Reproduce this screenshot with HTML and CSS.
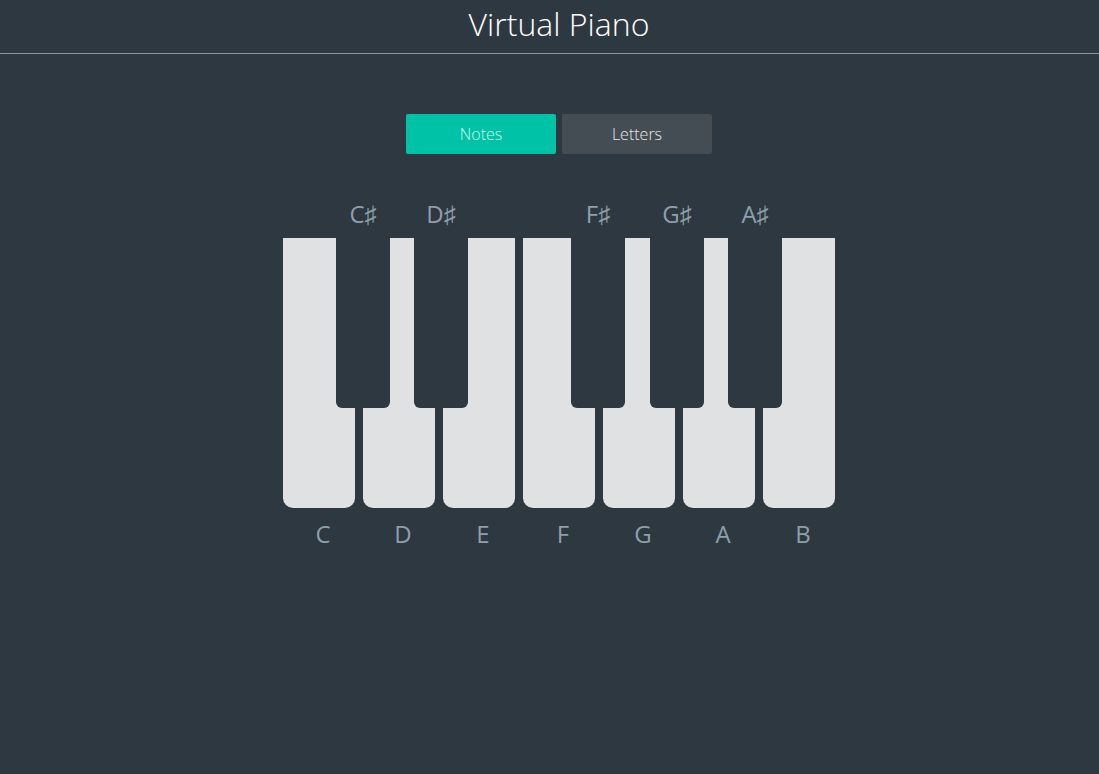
FILE: index.html
```html
<!DOCTYPE html>
<html>
<head>
<meta charset="utf-8">
<title>Virtual Piano</title>
<link rel="stylesheet" href="styles.css">
</head>
<body>
<header class="header"><h1 class="title">Virtual Piano</h1></header>
<main class="main">
  <div class="modes">
    <button class="mode mode-active">Notes</button>
    <button class="mode">Letters</button>
  </div>
  <div class="piano">
    <div class="sharps">
      <span class="sharp" style="left:53px">C♯</span>
      <span class="sharp" style="left:131px">D♯</span>
      <span class="sharp" style="left:288px">F♯</span>
      <span class="sharp" style="left:367px">G♯</span>
      <span class="sharp" style="left:445px">A♯</span>
    </div>
    <div class="keys">
      <div class="white"></div>
      <div class="white"></div>
      <div class="white"></div>
      <div class="white"></div>
      <div class="white"></div>
      <div class="white"></div>
      <div class="white"></div>
      <div class="black" style="left:53px"></div>
      <div class="black" style="left:131px"></div>
      <div class="black" style="left:288px"></div>
      <div class="black" style="left:367px"></div>
      <div class="black" style="left:445px"></div>
    </div>
    <div class="names">
      <span class="name">C</span>
      <span class="name">D</span>
      <span class="name">E</span>
      <span class="name">F</span>
      <span class="name">G</span>
      <span class="name">A</span>
      <span class="name">B</span>
    </div>
  </div>
</main>
</body>
</html>
```
FILE: styles.css
```css
html, body {
  margin: 0;
  padding: 0;
  background: #2e3840;
  font-family: "Open Sans", "Liberation Sans", sans-serif;
}
body {
  padding-left: 19px;
}
.header {
  height: 53px;
  border-bottom: 1px solid #8a949b;
  margin-left: -19px;
  padding-left: 19px;
  display: flex;
  justify-content: center;
  align-items: center;
}
.title {
  margin: 0;
  font-size: 32px;
  font-weight: 300;
  color: #ffffff;
  line-height: 1;
  padding-bottom: 6px;
}
.main {
  display: flex;
  flex-direction: column;
  align-items: center;
  padding-top: 60px;
}
.modes {
  display: flex;
  gap: 6px;
}
.mode {
  width: 150px;
  height: 40px;
  border: none;
  border-radius: 2px;
  background: #444c54;
  color: #e8e8e8;
  font-family: "Open Sans", "Liberation Sans", sans-serif;
  font-size: 16px;
  font-weight: 300;
  padding: 0;
}
.mode-active {
  background: #00c2a6;
  color: #c8fbf3;
}
.piano {
  position: relative;
  width: 552px;
  margin-top: 46px;
}
.sharps {
  position: relative;
  height: 38px;
}
.sharp {
  position: absolute;
  top: -1px;
  width: 54px;
  text-align: center;
  font-size: 24px;
  line-height: 30px;
  color: #8d9fab;
}
.keys {
  position: relative;
  display: flex;
  gap: 8px;
  height: 270px;
}
.white {
  width: 72px;
  height: 270px;
  background: #e0e1e3;
  border-radius: 0 0 10px 10px;
}
.black {
  position: absolute;
  top: 0;
  width: 54px;
  height: 170px;
  background: #2e3840;
  border-radius: 0 0 6px 6px;
}
.names {
  display: flex;
  gap: 8px;
  margin-top: 10px;
}
.name {
  width: 72px;
  box-sizing: border-box;
  padding-left: 8px;
  text-align: center;
  font-size: 24px;
  line-height: 32px;
  color: #8d9fab;
}
```
